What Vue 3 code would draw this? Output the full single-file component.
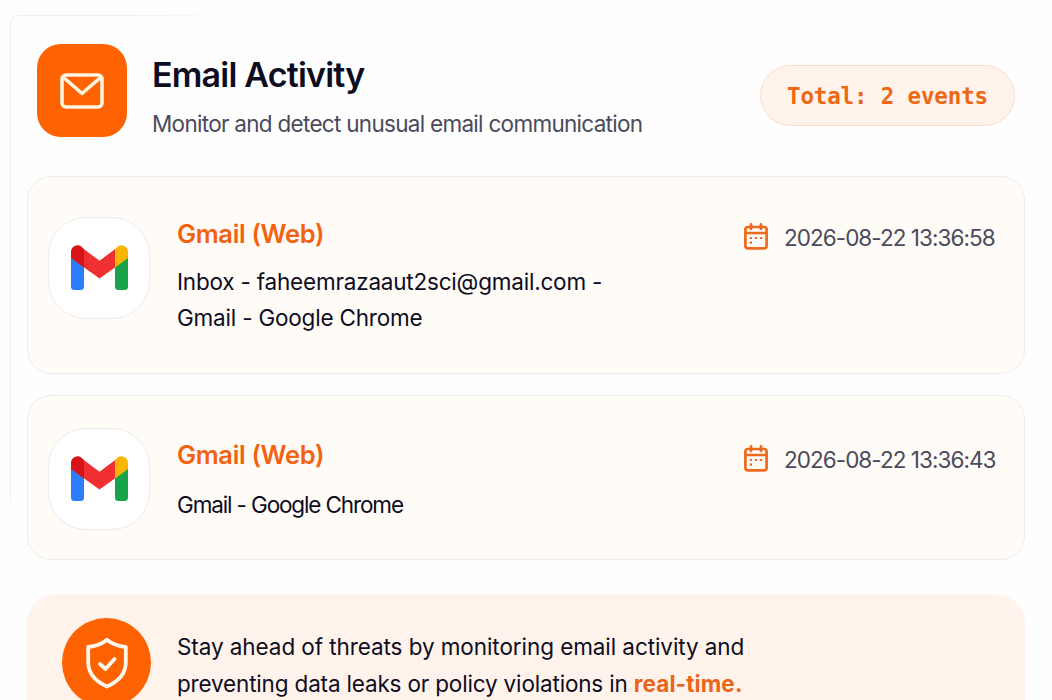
<template>
  <main class="panel">
    <header class="header">
      <div class="header-icon">
        <svg width="44" height="36" viewBox="0 0 44 36" fill="none">
          <rect x="2" y="2" width="40" height="32" rx="4" />
          <path d="M3.5 4.5L22 20.5L40.5 4.5" />
        </svg>
      </div>
      <div class="header-text">
        <h1>Email Activity</h1>
        <p>Monitor and detect unusual email communication</p>
      </div>
      <span class="total">Total: {{ events.length }} events</span>
    </header>

    <section class="events">
      <article
        v-for="event in events"
        :key="event.id"
        class="event"
        :class="{ compact: event.lines.length === 1 }"
      >
        <div class="app-icon">
          <svg width="57" height="46" viewBox="0 0 57 46">
            <path fill="#2b7dfa" d="M0 11.5L13 21V41.5a3.5 3.5 0 0 1-3.5 3.5h-6A3.5 3.5 0 0 1 0 41.5z" />
            <path fill="#16a34c" d="M57 11.5L44 21V41.5a3.5 3.5 0 0 0 3.5 3.5h6a3.5 3.5 0 0 0 3.5-3.5z" />
            <path fill="#f03030" d="M12.8 4L28.5 15.8L44.2 4V22.3L28.5 33.5L12.8 22.3z" />
            <path fill="#d91418" d="M0 6.6A6.5 6.5 0 0 1 10.5 1.8L13 4V22.5L0 13z" />
            <path fill="#fbb404" d="M57 6.6A6.5 6.5 0 0 0 46.5 1.8L44 4V22.5L57 13z" />
          </svg>
        </div>
        <div class="event-body">
          <h2>{{ event.app }}</h2>
          <p v-for="line in event.lines" :key="line">{{ line }}</p>
        </div>
        <div class="event-time">
          <svg width="24" height="27" viewBox="0 0 24 27" fill="none">
            <rect x="1.4" y="4" width="21.2" height="21.4" rx="2.6" />
            <path d="M1.5 10H22.5M7 1.4V6M17 1.4V6" />
            <path class="dots" d="M5.8 15h2.2M10.900 15h2.200M16 15h2.200M5.800 19.600h2.200" />
          </svg>
          <time>{{ event.time }}</time>
        </div>
      </article>
    </section>

    <section class="banner">
      <div class="banner-icon">
        <svg width="44" height="52" viewBox="0 0 44 52" fill="none">
          <path d="M22 2.8C17 7 10.5 9.2 3.2 10V25C3.2 36 10.5 44.5 22 49.5C33.5 44.5 40.8 36 40.8 25V10C33.5 9.2 27 7 22 2.8Z" />
          <path d="M15 27L20.5 32L29.5 22" />
        </svg>
      </div>
      <div class="banner-text">
        <p>Stay ahead of threats by monitoring email activity and</p>
        <p class="last">preventing data leaks or policy violations in <strong>real-time.</strong></p>
      </div>
    </section>
  </main>
</template>

<script setup>
const events = [
  {
    id: 1,
    app: 'Gmail (Web)',
    lines: ['Inbox - faheemrazaaut2sci@gmail.com -', 'Gmail - Google Chrome'],
    time: '2026-08-22 13:36:58',
  },
  {
    id: 2,
    app: 'Gmail (Web)',
    lines: ['Gmail - Google Chrome'],
    time: '2026-08-22 13:36:43',
  },
];
</script>

<style>
body {
  background: #fefefe;
}
</style>

<style scoped>
* {
  box-sizing: border-box;
}

h1,
h2,
p {
  margin: 0;
  white-space: nowrap;
}

.panel {
  position: relative;
  height: 700px;
  overflow: hidden;
  padding: 44px 27px 0;
  font-family: Inter, 'Liberation Sans', sans-serif;
  font-size: 22.5px;
  color: #0d0d1f;
}

/* outline that fades out towards the right */
.panel::before {
  content: '';
  position: absolute;
  top: 15px;
  left: 10px;
  width: 240px;
  height: 485px;
  border-top: 1px solid #efeff0;
  border-left: 1px solid #efeff0;
  border-top-left-radius: 8px;
  mask-image: linear-gradient(90deg, #000 50%, transparent 90%);
}

.header {
  display: flex;
  height: 132px;
  padding: 0 10px;
}

.header-icon {
  display: flex;
  align-items: center;
  justify-content: center;
  width: 90px;
  height: 93px;
  border-radius: 24px;
  background: #ff6200;
}

.header-icon svg {
  stroke: #fff4e2;
  stroke-width: 3.6;
  stroke-linejoin: round;
}

.header-text {
  flex: 1;
  padding: 11px 0 0 25px;
}

h1 {
  font-size: 34px;
  line-height: 40px;
  font-weight: 600;
  letter-spacing: -0.8px;
}

.header-text p {
  margin-top: 14px;
  line-height: 30px;
  letter-spacing: -0.71px;
  color: #4a4a5b;
}

.total {
  display: flex;
  align-items: center;
  justify-content: center;
  width: 255px;
  height: 61px;
  margin-top: 21px;
  border: 1px solid #fddcca;
  border-radius: 31px;
  background: #fff3eb;
  font: bold 22.5px 'DejaVu Sans Mono', monospace;
  letter-spacing: -0.15px;
  color: #ee6713;
}

.events {
  display: flex;
  flex-direction: column;
  gap: 21px;
}

.event {
  display: flex;
  align-items: flex-start;
  height: 198px;
  padding: 40px 28px 0 20px;
  border: 1px solid #ededee;
  border-radius: 24px;
  background: #fffbf7;
}

.event.compact {
  height: 165px;
  padding-top: 32px;
}

.app-icon {
  display: flex;
  align-items: center;
  justify-content: center;
  width: 102px;
  height: 102px;
  border: 1px solid #ebebeb;
  border-radius: 38px;
  background: #fff;
}

.event-body {
  flex: 1;
  padding-left: 27px;
}

h2 {
  margin-bottom: 13px;
  font-size: 25.5px;
  line-height: 34px;
  font-weight: 600;
  letter-spacing: -0.35px;
  color: #f36211;
}

.event-body p {
  line-height: 36px;
  letter-spacing: -0.2px;
}

.compact h2 {
  margin: 10px 0 15px;
}

.compact .event-body p {
  letter-spacing: -1.13px;
}

.event-time {
  display: flex;
  gap: 16px;
  padding-top: 6px;
  line-height: 30px;
  letter-spacing: -0.96px;
  color: #4a4a5c;
}

.event-time time {
  width: 212px;
  white-space: nowrap;
}

.compact .event-time {
  padding-top: 17px;
}

.event-time svg {
  stroke: #ee6a1e;
  stroke-width: 2.7;
  stroke-linecap: round;
}

.event-time .dots {
  stroke-width: 2.2;
  stroke-linecap: butt;
}

.banner {
  display: flex;
  height: 140px;
  margin-top: 34px;
  padding: 24px 35px;
  border-radius: 30px;
  background: #fff3eb;
}

.banner-icon {
  display: flex;
  align-items: center;
  justify-content: center;
  width: 89px;
  height: 89px;
  border-radius: 50%;
  background: #ff6200;
}

.banner-icon svg {
  stroke: #fff6ec;
  stroke-width: 3.8;
  stroke-linejoin: round;
  stroke-linecap: round;
}

.banner-text {
  padding: 10px 0 0 26px;
  line-height: 37px;
  letter-spacing: -0.08px;
}

.banner-text .last {
  letter-spacing: -0.17px;
}

strong {
  font-weight: 700;
  letter-spacing: 0.1px;
  color: #ec641a;
}
</style>
